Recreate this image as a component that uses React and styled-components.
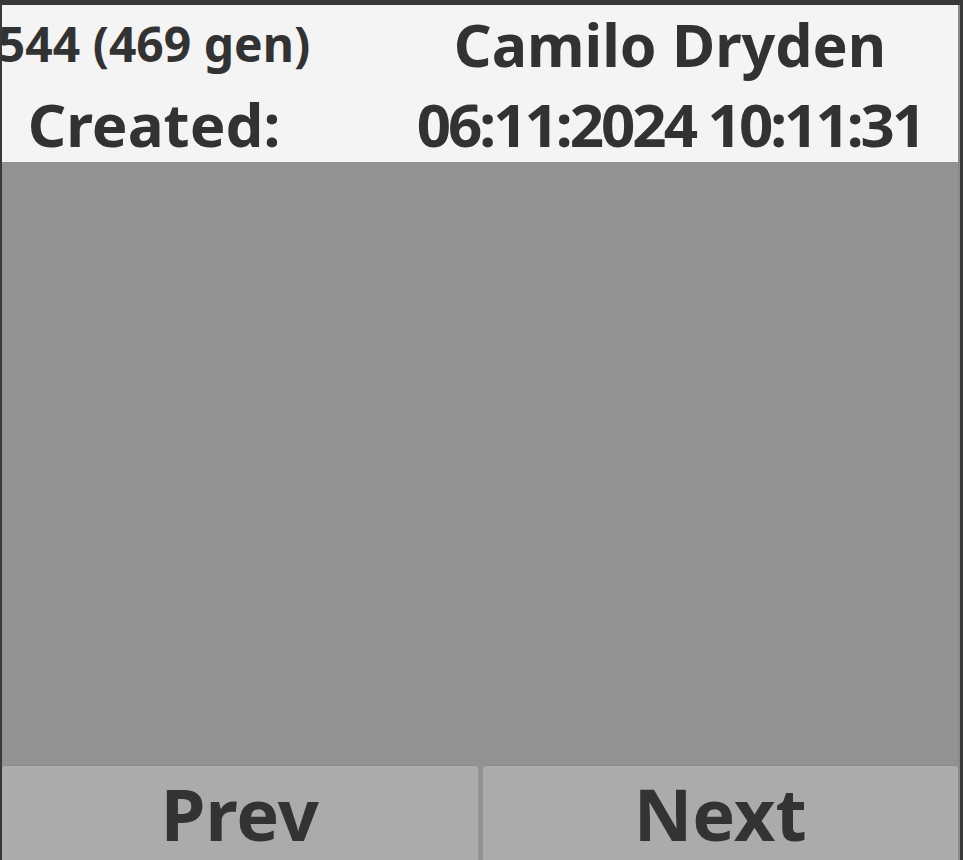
import React from "react";
import styled, { createGlobalStyle } from "styled-components";

const Global = createGlobalStyle`
  html, body {
    margin: 0;
    padding: 0;
    background: #383838;
    overflow: hidden;
    height: 860px;
  }
  #root { height: 860px; }
`;

const Frame = styled.div`
  display: flex;
  flex-direction: column;
  height: 860px;
  box-sizing: border-box;
  padding: 5px 5px 0 2px;
  font-family: "Noto Sans", "Open Sans", sans-serif;
  font-weight: 700;
  color: #323232;
`;

const Screen = styled.div`
  display: flex;
  flex-direction: column;
  flex: 1;
  background: #929292;
  box-shadow: 2px 0 0 #8a8a8a;
  overflow: hidden;
`;

const Header = styled.div`
  display: grid;
  grid-template-columns: 304px 576px;
  grid-template-rows: 78px 79px;
  justify-content: space-between;
  background: #f4f4f4;
  height: 157px;
  flex-shrink: 0;
`;

const Cell = styled.div`
  display: flex;
  align-items: center;
  justify-content: center;
  white-space: nowrap;
  font-size: ${(p) => p.$size || 60}px;
  letter-spacing: ${(p) => p.$track || 0}px;
  line-height: 78px;
  padding-top: ${(p) => p.$shift || 0}px;
  overflow: visible;
`;

const Body = styled.div`
  flex: 1;
`;

const ButtonRow = styled.div`
  display: grid;
  grid-template-columns: 1fr 1fr;
  column-gap: 5px;
  height: 95px;
  flex-shrink: 0;
`;

const NavButton = styled.button`
  display: flex;
  align-items: center;
  justify-content: center;
  background: #ababab;
  border: none;
  border-top: 1px solid #8c8c8c;
  border-radius: 3px 3px 0 0;
  font-family: inherit;
  font-weight: 700;
  font-size: 72px;
  line-height: 1;
  color: #333333;
  padding: 0 0 1px;
  margin: 0;
`;

export default function App() {
  return (
    <>
      <Global />
      <Frame>
        <Screen>
          <Header>
            <Cell $size={48}>544 (469 gen)</Cell>
            <Cell $size={59}>Camilo Dryden</Cell>
            <Cell $shift={3}>Created:</Cell>
            <Cell $shift={3} $track={-3}>06:11:2024 10:11:31</Cell>
          </Header>
          <Body />
          <ButtonRow>
            <NavButton>Prev</NavButton>
            <NavButton>Next</NavButton>
          </ButtonRow>
        </Screen>
      </Frame>
    </>
  );
}
